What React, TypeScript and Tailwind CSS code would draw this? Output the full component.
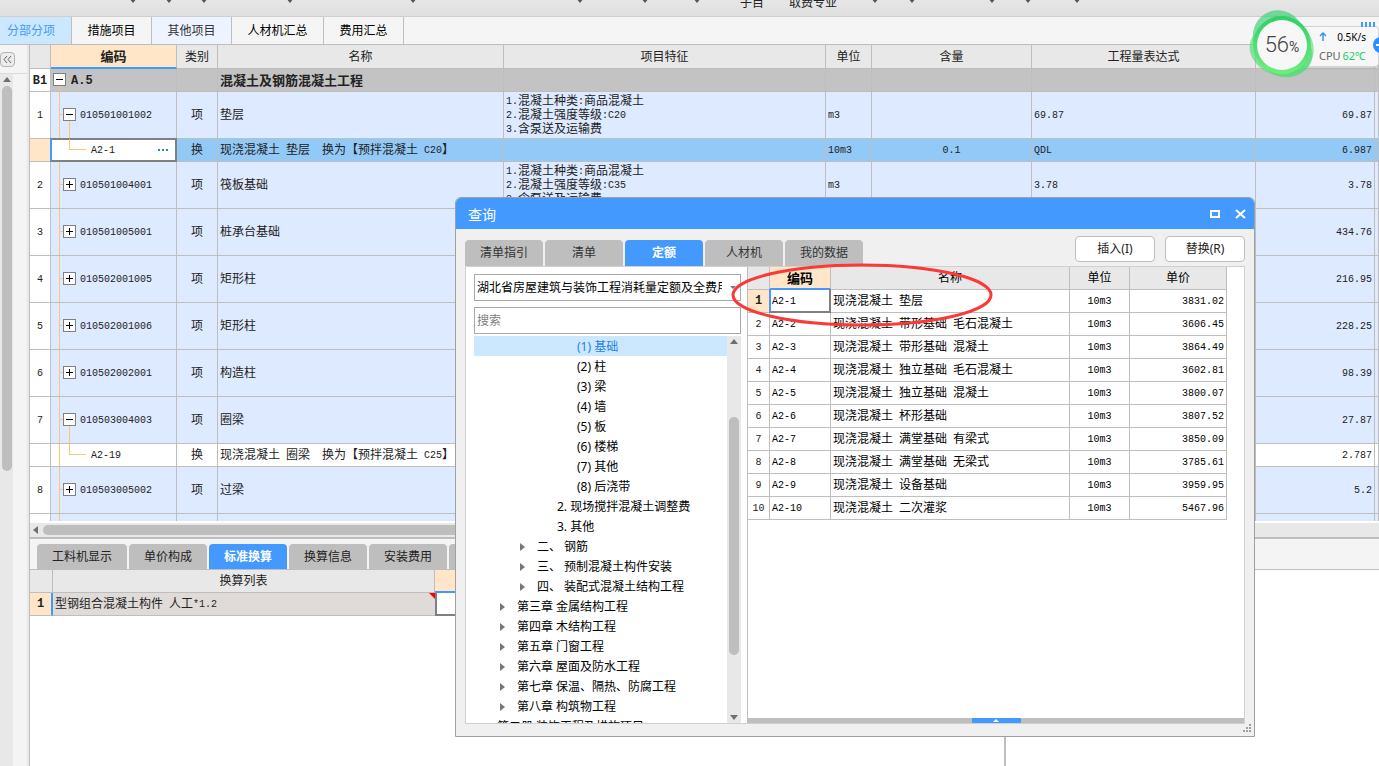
import { Fragment, type ReactNode } from 'react'
import clsx from 'clsx'

type Row = {
  no: string
  code: string
  kind: 'root' | 'item' | 'sub'
  open?: boolean
  selected?: boolean
  type?: string
  name?: string
  feature?: string[]
  unit?: string
  content?: string
  expr?: string
  qty?: string
}

const rows: Row[] = [
  { no: 'B1', code: 'A.5', kind: 'root', open: true, name: '混凝土及钢筋混凝土工程' },
  {
    no: '1', code: '010501001002', kind: 'item', open: true, type: '项', name: '垫层',
    feature: ['1.混凝土种类:商品混凝土', '2.混凝土强度等级:C20', '3.含泵送及运输费'],
    unit: 'm3', expr: '69.87', qty: '69.87',
  },
  {
    no: '', code: 'A2-1', kind: 'sub', selected: true, type: '换',
    name: '现浇混凝土 垫层  换为【预拌混凝土 C20】',
    unit: '10m3', content: '0.1', expr: 'QDL', qty: '6.987',
  },
  {
    no: '2', code: '010501004001', kind: 'item', type: '项', name: '筏板基础',
    feature: ['1.混凝土种类:商品混凝土', '2.混凝土强度等级:C35', '3.含泵送及运输费'],
    unit: 'm3', expr: '3.78', qty: '3.78',
  },
  { no: '3', code: '010501005001', kind: 'item', type: '项', name: '桩承台基础', qty: '434.76' },
  { no: '4', code: '010502001005', kind: 'item', type: '项', name: '矩形柱', qty: '216.95' },
  { no: '5', code: '010502001006', kind: 'item', type: '项', name: '矩形柱', qty: '228.25' },
  { no: '6', code: '010502002001', kind: 'item', type: '项', name: '构造柱', qty: '98.39' },
  { no: '7', code: '010503004003', kind: 'item', open: true, type: '项', name: '圈梁', qty: '27.87' },
  {
    no: '', code: 'A2-19', kind: 'sub', type: '换',
    name: '现浇混凝土 圈梁  换为【预拌混凝土 C25】', qty: '2.787',
  },
  { no: '8', code: '010503005002', kind: 'item', type: '项', name: '过梁', qty: '5.2' },
  { no: '', code: '', kind: 'item' },
]

const quotas = [
  ['A2-1', '现浇混凝土 垫层', '3831.02'],
  ['A2-2', '现浇混凝土 带形基础 毛石混凝土', '3606.45'],
  ['A2-3', '现浇混凝土 带形基础 混凝土', '3864.49'],
  ['A2-4', '现浇混凝土 独立基础 毛石混凝土', '3602.81'],
  ['A2-5', '现浇混凝土 独立基础 混凝土', '3800.07'],
  ['A2-6', '现浇混凝土 杯形基础', '3807.52'],
  ['A2-7', '现浇混凝土 满堂基础 有梁式', '3850.09'],
  ['A2-8', '现浇混凝土 满堂基础 无梁式', '3785.61'],
  ['A2-9', '现浇混凝土 设备基础', '3959.95'],
  ['A2-10', '现浇混凝土 二次灌浆', '5467.96'],
]

const indents = {
  leaf: 'pl-[103px]',
  group: 'pl-[83px]',
  section: 'pl-[46px]',
  chapter: 'pl-[26px]',
  book: 'pl-[23px]',
}

const tree: { level: keyof typeof indents; label: string }[] = [
  { level: 'leaf', label: '(1) 基础' },
  { level: 'leaf', label: '(2) 柱' },
  { level: 'leaf', label: '(3) 梁' },
  { level: 'leaf', label: '(4) 墙' },
  { level: 'leaf', label: '(5) 板' },
  { level: 'leaf', label: '(6) 楼梯' },
  { level: 'leaf', label: '(7) 其他' },
  { level: 'leaf', label: '(8) 后浇带' },
  { level: 'group', label: '2. 现场搅拌混凝土调整费' },
  { level: 'group', label: '3. 其他' },
  { level: 'section', label: '二、 钢筋' },
  { level: 'section', label: '三、 预制混凝土构件安装' },
  { level: 'section', label: '四、 装配式混凝土结构工程' },
  { level: 'chapter', label: '第三章 金属结构工程' },
  { level: 'chapter', label: '第四章 木结构工程' },
  { level: 'chapter', label: '第五章 门窗工程' },
  { level: 'chapter', label: '第六章 屋面及防水工程' },
  { level: 'chapter', label: '第七章 保温、隔热、防腐工程' },
  { level: 'chapter', label: '第八章 构筑物工程' },
  { level: 'book', label: '第二册 装饰工程及措施项目' },
]

// Half-width characters take exactly half a CJK cell in the grids
function GridText({ children, large }: { children: string; large?: boolean }) {
  return (
    <span className={clsx('whitespace-pre', large && 'text-[13px]')}>
      {children.split(/([ -~]+)/).map((part, i) =>
        i % 2 ? (
          <span
            key={i}
            className={clsx("align-[1px] font-['Liberation_Mono',monospace]", large ? 'text-[12px]' : 'text-[10px]')}
          >
            {part}
          </span>
        ) : (
          <Fragment key={i}>{part}</Fragment>
        ),
      )}
    </span>
  )
}

function Caret({ dir, className }: { dir: 'up' | 'down' | 'left' | 'right'; className?: string }) {
  const points = {
    up: '0,5 4,0 8,5',
    down: '0,0 8,0 4,5',
    left: '5,0 5,8 0,4',
    right: '0,0 5,4 0,8',
  }[dir]
  const tall = dir === 'left' || dir === 'right'
  return (
    <svg width={tall ? 5 : 8} height={tall ? 8 : 5} className={clsx('shrink-0', className)} aria-hidden>
      <polygon points={points} fill="currentColor" />
    </svg>
  )
}

function Toggle({ x, y, open }: { x: number; y: number; open?: boolean }) {
  return (
    <g shapeRendering="crispEdges">
      <rect x={x + 0.5} y={y + 0.5} width="12" height="12" fill="#fff" stroke="#808080" />
      <path d={`M${x + 3} ${y + 6.5}h7`} stroke="#000" />
      {!open && <path d={`M${x + 6.5} ${y + 3}v7`} stroke="#000" />}
    </g>
  )
}

function TreeGutter({ row }: { row: Row }) {
  if (row.kind === 'root') {
    return (
      <svg width="20" height="22" aria-hidden>
        <path d="M8.5 17V22" stroke="#ffc478" shapeRendering="crispEdges" />
        <Toggle x={2} y={4} open />
      </svg>
    )
  }
  if (row.kind === 'sub') {
    return (
      <svg width="40" height="22" aria-hidden>
        <g stroke="#ffc478" fill="none" shapeRendering="crispEdges">
          {!row.selected && <path d="M8.5 0V22" />}
          <path d="M18.5 0V10.5H35" />
        </g>
      </svg>
    )
  }
  return (
    <svg width="29" height="46" aria-hidden>
      <g stroke="#ffc478" fill="none" shapeRendering="crispEdges">
        <path d="M8.5 0V46M8 22.5H12" />
        {row.open && <path d="M18.5 29V46" />}
      </g>
      <Toggle x={12} y={16} open={row.open} />
    </svg>
  )
}

function Th({ children, active }: { children?: ReactNode; active?: boolean }) {
  return (
    <th
      className={clsx(
        'border-r border-b border-[#bebebe] p-0',
        active
          ? 'border-b-2 border-b-[#4499ff] bg-[#ffe6c8] text-[13px] leading-4 font-bold'
          : 'bg-[#e8e8e8] font-normal',
      )}
    >
      {children}
    </th>
  )
}

const cell = 'border-r border-b border-[#bebebe] px-0.5 py-0'

function MainGrid() {
  return (
    <table className="w-full table-fixed border-separate border-spacing-0 text-[#222]">
      <colgroup>
        <col className="w-[21px]" />
        <col className="w-[126px]" />
        <col className="w-[41px]" />
        <col className="w-[286px]" />
        <col className="w-[322px]" />
        <col className="w-[46px]" />
        <col className="w-[160px]" />
        <col className="w-[224px]" />
        <col className="w-[119px]" />
        <col />
      </colgroup>
      <thead>
        <tr className="h-6">
          <Th />
          <Th active>编码</Th>
          <Th>类别</Th>
          <Th>名称</Th>
          <Th>项目特征</Th>
          <Th>单位</Th>
          <Th>含量</Th>
          <Th>工程量表达式</Th>
          <Th />
          <Th />
        </tr>
      </thead>
      <tbody>
        {rows.map((row, i) => (
          <tr
            key={i}
            className={clsx(
              row.kind === 'item' ? 'h-[47px] bg-[#deeaff]' : 'h-[23px]',
              row.kind === 'root' && 'bg-[#c3c3c3] leading-4 font-bold',
              row.kind === 'sub' && (row.selected ? 'bg-[#93c9f7]' : 'bg-white'),
            )}
          >
            <td className={clsx(cell, 'text-center', row.selected ? 'bg-[#ffe6c8]' : 'bg-white')}>
              <GridText large={row.kind === 'root'}>{row.no}</GridText>
            </td>
            <td className="relative border-r border-b border-[#bebebe] p-0">
              {row.selected && (
                <div className="absolute -inset-px border-2 border-[#808080] border-l-[#4499ff] bg-white" />
              )}
              <div className="relative flex items-center">
                <TreeGutter row={row} />
                <GridText large={row.kind === 'root'}>{row.code}</GridText>
                {row.selected && (
                  <button className="mr-2 ml-auto flex gap-0.5" aria-label="更多">
                    <span className="size-[2px] bg-[#2b7fd8]" />
                    <span className="size-[2px] bg-[#2b7fd8]" />
                    <span className="size-[2px] bg-[#2b7fd8]" />
                  </button>
                )}
              </div>
            </td>
            <td className={clsx(cell, 'text-center')}>{row.type}</td>
            <td className={cell}>
              <GridText large={row.kind === 'root'}>{row.name ?? ''}</GridText>
            </td>
            <td className={clsx(cell, 'leading-[14px]')}>
              {row.feature?.map((line) => (
                <div key={line} className="h-[14px]">
                  <GridText>{line}</GridText>
                </div>
              ))}
            </td>
            <td className={cell}>
              <GridText>{row.unit ?? ''}</GridText>
            </td>
            <td className={clsx(cell, 'text-center')}>
              <GridText>{row.content ?? ''}</GridText>
            </td>
            <td className={cell}>
              <GridText>{row.expr ?? ''}</GridText>
            </td>
            <td className={clsx(cell, 'text-right')}>
              <GridText>{row.qty ?? ''}</GridText>
            </td>
            <td className={cell} />
          </tr>
        ))}
      </tbody>
    </table>
  )
}

const toolbar = [
  { w: 'w-[137px]' },
  { w: 'w-[36px]' },
  { w: 'w-[35px]' },
  { w: 'w-[86px]' },
  { w: 'w-[123px]' },
  { w: 'w-[167px]' },
  { w: 'w-[65px]' },
  { w: 'w-[52px]' },
  { w: 'w-[63px]', label: '子目' },
  { w: 'w-[73px]', label: '取费专业' },
  { w: 'w-[42px]' },
  { w: 'w-[37px]' },
  { w: 'w-[80px]' },
  { w: 'w-[36px]' },
  { w: 'w-[49px]' },
]

function Toolbar() {
  return (
    <div className="flex h-[17px] shrink-0 overflow-hidden border-b border-[#cfcfcf] bg-linear-to-b from-[#e6e6e6] to-[#e0e0e0]">
      {toolbar.map((item, i) => (
        <button
          key={i}
          className={clsx('flex h-5 shrink-0 items-center justify-end', item.label ? '-mt-[7px]' : '-mt-[10px]', item.w)}
          aria-label={item.label ?? '展开'}
        >
          {item.label ?? <Caret dir="down" className="text-[#555]" />}
        </button>
      ))}
    </div>
  )
}

function PageTabs() {
  const tab = 'h-full shrink-0 border-r border-[#bebebe]'
  return (
    <nav className="flex h-7 shrink-0 border-b border-[#bebebe] bg-[#f5f5f5] text-black">
      <button className={clsx(tab, 'w-[72px] bg-[#cce8ff] pl-[7px] text-left text-[#4499ff]')}>分部分项</button>
      <button className={clsx(tab, 'w-20')}>措施项目</button>
      <button className={clsx(tab, 'w-20 bg-[#eef4ff] text-[#333]')}>其他项目</button>
      <button className={clsx(tab, 'w-[92px]')}>人材机汇总</button>
      <button className={clsx(tab, 'w-20')}>费用汇总</button>
    </nav>
  )
}

function SideBar() {
  return (
    <aside className="flex w-[29px] shrink-0 flex-col border-r-2 border-[#e8e8e8] bg-[#f4f4f4]">
      <div className="flex h-[29px] items-center border-b border-[#dcdcdc]">
        <button
          aria-label="收起"
          className="flex size-[15px] items-center justify-center rounded-sm border border-[#b4b4b4] bg-[#ececec] text-[#666]"
        >
          <svg width="9" height="9" fill="none" stroke="currentColor" aria-hidden>
            <path d="M4 1L1 4.5L4 8M8 1L5 4.5L8 8" />
          </svg>
        </button>
      </div>
      <div className="flex w-[13px] flex-1 flex-col items-center bg-[#e8e8e8] pt-[3px]">
        <Caret dir="up" className="text-[#6e6e78]" />
        <div className="mt-1 h-[385px] w-[10px] rounded-full bg-[#bebebe]" />
      </div>
    </aside>
  )
}

function DetailPane() {
  const tabs = ['工料机显示', '单价构成', '标准换算', '换算信息', '安装费用', '']
  return (
    <section className="flex h-[229px] shrink-0 flex-col border-t-2 border-[#bebebe] bg-[#f4f4f4]">
      <div className="flex h-[31px] items-end gap-0.5 border-b border-[#bebebe] pl-[7px]">
        {tabs.map((t, i) => (
          <button
            key={t}
            className={clsx(
              'h-[25px] rounded-t-sm',
              i === 0 ? 'w-[90px]' : 'w-[78px]',
              t === '标准换算' ? 'bg-[#4499ff] font-bold text-white' : 'bg-[#bebebe] text-[#222]',
            )}
          >
            {t}
          </button>
        ))}
      </div>
      <div className="flex flex-1 bg-white">
        <div className="w-[976px] border-r-2 border-[#bebebe]">
          <table className="w-[705px] table-fixed border-separate border-spacing-0 text-[#222]">
            <colgroup>
              <col className="w-[23px]" />
              <col className="w-[382px]" />
              <col className="w-[300px]" />
            </colgroup>
            <thead>
              <tr className="h-[23px]">
                <Th />
                <Th>换算列表</Th>
                <Th active />
              </tr>
            </thead>
            <tbody>
              <tr className="h-[23px]">
                <td className="border-r-2 border-b border-[#bebebe] border-r-[#4499ff] bg-[#ffe6c8] p-0 text-center font-bold">
                  <GridText large>1</GridText>
                </td>
                <td className="relative border-b border-[#bebebe] bg-[#e0dbd8] px-0.5 py-0">
                  <GridText>型钢组合混凝土构件 人工*1.2</GridText>
                  <svg width="6" height="6" className="absolute top-0 right-0" aria-hidden>
                    <path d="M0 0H6V6Z" fill="#f00" />
                  </svg>
                </td>
                <td className="border-2 border-t-0 border-[#808080] bg-white p-0" />
              </tr>
            </tbody>
          </table>
        </div>
      </div>
    </section>
  )
}

function QuotaTable() {
  return (
    <table className="w-[479px] table-fixed border-separate border-spacing-0 text-black">
      <colgroup>
        <col className="w-[22px]" />
        <col className="w-[61px]" />
        <col className="w-[239px]" />
        <col className="w-[60px]" />
        <col className="w-[97px]" />
      </colgroup>
      <thead>
        <tr className="h-[23px]">
          <Th />
          <Th active>编码</Th>
          <Th>名称</Th>
          <Th>单位</Th>
          <Th>单价</Th>
        </tr>
      </thead>
      <tbody>
        {quotas.map(([code, name, price], i) => (
          <tr key={code} className="h-[23px]">
            <td className={clsx('border-r border-b border-[#bebebe] p-0 text-center text-[#222]', i === 0 && 'bg-[#ffe6c8] font-bold')}>
              <GridText large={i === 0}>{String(i + 1)}</GridText>
            </td>
            <td className={clsx(cell, 'relative')}>
              {i === 0 && (
                <div className="absolute -inset-px border-2 border-t-0 border-[#808080] border-l-[#4499ff]" />
              )}
              <GridText>{code}</GridText>
            </td>
            <td className={cell}>
              <GridText>{name}</GridText>
            </td>
            <td className={clsx(cell, 'text-center')}>
              <GridText>10m3</GridText>
            </td>
            <td className={clsx(cell, 'text-right')}>
              <GridText>{price}</GridText>
            </td>
          </tr>
        ))}
      </tbody>
    </table>
  )
}

function QueryDialog() {
  const tabs = ['清单指引', '清单', '定额', '人材机', '我的数据']
  return (
    <div
      role="dialog"
      aria-label="查询"
      className="absolute top-[197px] left-[455px] flex h-[540px] w-[800px] flex-col rounded-t-md border border-[#a0a0a0] bg-[#f0f0f0]"
    >
      <header className="flex h-[31px] shrink-0 items-center rounded-t-[5px] bg-[#4499ff] pt-0.5 pr-2 pl-3 text-white">
        <h2 className="flex-1 text-sm">查询</h2>
        <button aria-label="最大化" className="mr-[14px] mb-0.5">
          <svg width="12" height="10" fill="none" stroke="currentColor" strokeWidth="2" aria-hidden>
            <path d="M2 2H10V8H2Z" />
          </svg>
        </button>
        <button aria-label="关闭" className="mb-0.5">
          <svg width="11" height="10" fill="none" stroke="currentColor" strokeWidth="2" aria-hidden>
            <path d="M1 1L10 9M10 1L1 9" />
          </svg>
        </button>
      </header>

      <div className="flex h-[37px] shrink-0 items-end gap-0.5 px-[9px]">
        {tabs.map((t) => (
          <button
            key={t}
            className={clsx(
              'h-[26px] w-[78px] rounded-t-sm',
              t === '定额' ? 'bg-[#4499ff] font-bold text-white' : 'bg-[#bebebe] text-[#333]',
            )}
          >
            {t}
          </button>
        ))}
        <div className="mb-1 ml-auto flex gap-[10px]">
          <button className="h-[26px] w-20 rounded-sm border border-[#bebebe] bg-white text-[#222]">插入(I)</button>
          <button className="h-[26px] w-20 rounded-sm border border-[#bebebe] bg-white text-[#222]">替换(R)</button>
        </div>
      </div>

      <div className="mx-[9px] flex min-h-0 flex-1 border border-[#d0d0d0] bg-white">
        <div className="flex w-[275px] shrink-0 flex-col pt-[7px] pl-2 text-black">
          <label className="relative block">
            <select aria-label="定额库" className="h-[27px] w-full appearance-none border border-[#a8a8a8] bg-white pr-[18px] pl-0.5">
              <option>湖北省房屋建筑与装饰工程消耗量定额及全费用基价表(2018)</option>
            </select>
            <svg width="6" height="3" className="absolute top-3 right-[5px]" aria-hidden>
              <path d="M0 0H6L3 3Z" fill="#777" />
            </svg>
          </label>
          <input
            aria-label="搜索"
            placeholder="搜索"
            className="mt-[6px] h-[27px] border border-[#a8a8a8] bg-white px-0.5 placeholder:text-[#808080]"
          />
          <div className="mt-0.5 flex min-h-0 flex-1">
            <ul className="flex-1 overflow-hidden">
              {tree.map((node, i) => (
                <li
                  key={node.label}
                  className={clsx(
                    'flex h-5 items-center pt-0.5 whitespace-pre',
                    indents[node.level],
                    i === 0 && 'bg-[#cce8ff] text-[#1f7fe8]',
                  )}
                >
                  {(node.level === 'section' || node.level === 'chapter') && (
                    <Caret dir="right" className="mr-3 text-[#777]" />
                  )}
                  {node.label}
                </li>
              ))}
            </ul>
            <div className="flex w-[14px] flex-col items-center bg-[#e8e8e8] py-[3px]">
              <Caret dir="up" className="text-[#6e6e78]" />
              <div className="mt-[73px] h-[238px] w-[10px] rounded-full bg-[#bebebe]" />
              <Caret dir="down" className="mt-auto text-[#6e6e78]" />
            </div>
          </div>
        </div>

        <div className="ml-[6px] flex flex-1 flex-col border-l border-[#bebebe]">
          <QuotaTable />
          <div className="mt-auto flex h-[5px] justify-center bg-[#bebebe]">
            <button aria-label="展开" className="flex w-[49px] items-center justify-center bg-[#4499ff]">
              <svg width="6" height="3" aria-hidden>
                <path d="M0 3L3 0L6 3Z" fill="#fff" />
              </svg>
            </button>
          </div>
        </div>
      </div>

      <footer className="flex h-3 shrink-0 justify-end pr-[3px]">
        <svg width="8" height="9" fill="#a0a0a0" aria-hidden>
          <path d="M6 0h2v2h-2zM6 3h2v2h-2zM3 3h2v2h-2zM6 6h2v2h-2zM3 6h2v2h-2zM0 6h2v2h-2z" />
        </svg>
      </footer>
    </div>
  )
}

function Monitor() {
  return (
    <div className="absolute top-[10px] right-0 flex w-[130px] items-start text-[10px]">
      <div className="relative z-10 flex h-[69px] w-[66px] shrink-0 items-center justify-center">
        <svg width="66" height="69" className="absolute inset-0" aria-hidden>
          <defs>
            <linearGradient id="ring" x1="0" y1="0" x2="0" y2="1">
              <stop offset="0" stopColor="#2fcf68" />
              <stop offset="1" stopColor="#6fee7c" />
            </linearGradient>
          </defs>
          <ellipse cx="30" cy="28" rx="26" ry="28" fill="#35cf70" opacity=".65" transform="rotate(-20 30 28)" />
          <ellipse cx="32" cy="41" rx="32" ry="25" fill="#5fdc80" opacity=".7" transform="rotate(18 32 41)" />
          <ellipse cx="36" cy="38" rx="28" ry="30" fill="#4fdc74" opacity=".6" transform="rotate(-35 36 38)" />
          <circle cx="33" cy="35" r="29" fill="url(#ring)" />
          <circle cx="33" cy="35" r="25" fill="#f7f7f7" />
        </svg>
        <div className="relative font-[Roboto,sans-serif] text-[#444]">
          <span className="text-[22px] font-light">56</span>
          <span className="text-[14px]">%</span>
        </div>
      </div>
      <div className="mt-4 -ml-4 flex h-[41px] flex-1 flex-col justify-around rounded-sm border border-[#d4d4d4] bg-[#f7f7f7] pr-3 pl-[19px] font-['Noto_Sans',sans-serif] leading-[18px] shadow-sm">
        <div className="flex items-center justify-between text-black">
          <svg width="8" height="9" fill="none" stroke="#3a94ff" strokeWidth="1.5" aria-hidden>
            <path d="M4 9V1M1 4L4 1L7 4" />
          </svg>
          0.5K/s
        </div>
        <div className="flex justify-between text-[11px] text-[#666]">
          CPU <span className="text-[#14d264]">62℃</span>
        </div>
      </div>
      <svg width="14" height="5" className="absolute top-3 right-1" aria-hidden>
        <path d="M1 0V5M5 0V5M9 0V5M13 0V5" stroke="#4499ff" strokeWidth="2" />
      </svg>
      <svg width="6" height="16" className="absolute top-[27px] right-0" aria-hidden>
        <circle cx="8" cy="8" r="8" fill="#2b8fff" />
        <path d="M3 8H6" stroke="#fff" strokeWidth="2" />
      </svg>
    </div>
  )
}

export default function App() {
  return (
    <div className="relative flex h-screen flex-col overflow-hidden bg-[#f4f4f4] font-['Noto_Sans','Noto_Sans_CJK_SC',sans-serif] text-xs text-[#222]">
      <Toolbar />
      <PageTabs />
      <div className="flex min-h-0 flex-1">
        <SideBar />
        <main className="flex min-w-0 flex-1 flex-col border-l border-[#bebebe]">
          <div className="min-h-0 flex-1 overflow-hidden">
            <MainGrid />
          </div>
          <div className="flex h-4 shrink-0 items-center border-t-2 border-white bg-[#e8e8e8] pl-[3px]">
            <Caret dir="left" className="text-[#6e6e78]" />
            <div className="ml-[5px] h-[10px] w-1/2 rounded-full bg-[#bebebe]" />
          </div>
          <DetailPane />
        </main>
      </div>
      <QueryDialog />
      <Monitor />
      {/* hand-drawn highlight round the first quota */}
      <svg width="264" height="66" className="absolute top-[262px] left-[730px]" fill="none" aria-hidden>
        <ellipse cx="132" cy="33" rx="129" ry="30" stroke="#f93a37" strokeWidth="3" />
      </svg>
    </div>
  )
}
